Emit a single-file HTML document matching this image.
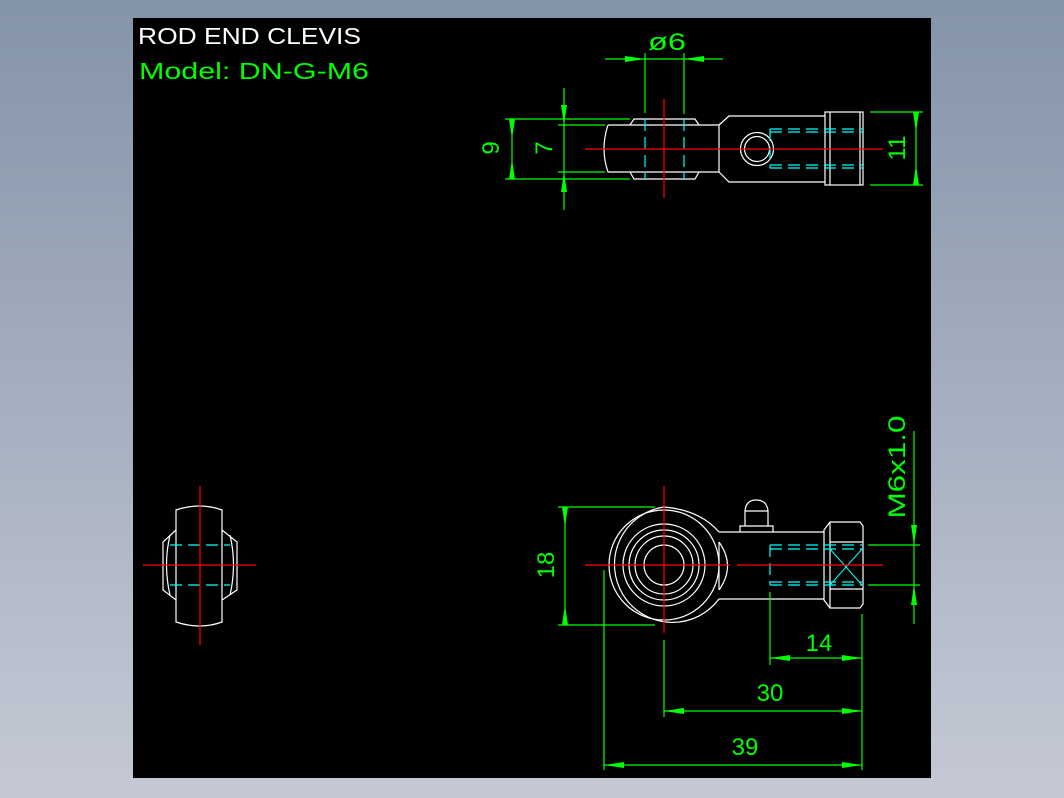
<!DOCTYPE html>
<html><head><meta charset="utf-8"><style>
html,body{margin:0;padding:0;width:1064px;height:798px;overflow:hidden;background:linear-gradient(#8494a9,#c5c9d5);}
svg{position:absolute;left:0;top:0;}
text{font-family:"Liberation Sans",sans-serif;}
</style></head><body>
<svg width="1064" height="798" viewBox="0 0 1064 798">
<rect x="133" y="18" width="798" height="760" fill="#000"/>
<text x="138" y="44" font-size="23" fill="#fff" textLength="223" lengthAdjust="spacingAndGlyphs">ROD END CLEVIS</text>
<text x="139" y="79" font-size="23" fill="#0f0" textLength="230" lengthAdjust="spacingAndGlyphs">Model: DN-G-M6</text>

<g fill="none" stroke="#fff" stroke-width="1.2">
<!-- top view -->
<path d="M608 125 L719 125 L719 172 L608 172 Q600 149 608 125"/>
<path d="M630 125 L634 119 L695 119 L699 125 M630 172 L634 179 L695 179 L699 172"/>
<path d="M719 125 L729 116 L825 116 M719 172 L729 182 L825 182"/>
<circle cx="757" cy="149" r="16.5"/><circle cx="757" cy="149" r="12.5"/>
<rect x="825" y="112" width="38" height="73"/>
<path d="M830 112 V185 M860 112 V185"/>
<!-- front view -->
<path d="M719 532 Q700 510 664 507 A58 58 0 1 0 719 599"/>
<circle cx="664" cy="565" r="55"/><circle cx="664" cy="565" r="41"/><circle cx="664" cy="565" r="35"/><circle cx="664" cy="565" r="29"/><circle cx="664" cy="565" r="20"/>
<path d="M719 532 H824 M719 599 H824 M719 542 V590 M719 542 Q736 566 719 590"/>
<path d="M740 532 V526 H773 V532 M745 526 V511 H768 V526 M745 511 Q746 500 756 500 Q767 500 768 511"/>
<path d="M830 522 L824 530 V600 L830 608 M830 522 H860 L863 526 V604 L860 608 H830 Z M830 542 H863 M830 589 H863"/>
<!-- side view -->
<path d="M176 510 Q200 502 222 510 V622 Q200 630 176 622 Z"/>
<path d="M176 530 L163 542 V590 L176 600 M222 530 L237 542 V590 L222 600 M170 535 Q163 565 170 595 M230 535 Q237 565 230 595"/>
</g>

<g fill="none" stroke="#0ff" stroke-width="1.2" stroke-dasharray="12 6">
<path d="M645 119 V179 M684 119 V179"/>
<path d="M770 129 H863 M770 132 H863 M770 165 H863 M770 168 H863 M770 129 V168"/>
<path d="M770 545 H862 M770 549 H862 M770 582 H862 M770 585 H862 M770 545 V585"/>
<path d="M170 545 H230 M170 585 H230"/>
</g>
<path d="M830 549 L862 585 M862 549 L830 585" stroke="#0ff" stroke-width="1"/>

<g stroke="#f00" stroke-width="1.2" fill="none">
<path d="M585 149 H883 M664 99 V198"/>
<path d="M585 565 H730 M737 565 H883 M664 486 V633"/>
<path d="M143 565 H256 M200 486 V645"/>
</g>

<g stroke="#0f0" stroke-width="1.2" fill="none">
<path d="M605 59 H723 M645 53 V113 M684 53 V114"/>
<path d="M505 119 H630 M505 179 H630 M512 119 V179"/>
<path d="M558 125 H605 M558 172 H605 M564 88 V210"/>
<path d="M870 112 H923 M870 185 H923 M916 112 V185"/>
<path d="M558 507 H655 M558 625 H655 M565 507 V625"/>
<path d="M770 592 V665 M862 614 V770 M770 658 H862"/>
<path d="M664 640 V717 M664 711 H862"/>
<path d="M604 570 V770 M604 765 H862"/>
<path d="M914 431 V624 M868 545 H920 M868 585 H920"/>
</g>
<g fill="#0f0">
<path d="M625 56 L645 59 L625 62Z M704 56 L684 59 L704 62Z"/>
<path d="M509 119 L512 139 L515 119Z M509 179 L512 159 L515 179Z"/>
<path d="M561 105 L564 125 L567 105Z M561 192 L564 172 L567 192Z"/>
<path d="M913 112 L916 132 L919 112Z M913 185 L916 165 L919 185Z"/>
<path d="M562 507 L565 527 L568 507Z M562 625 L565 605 L568 625Z"/>
<path d="M770 658 L790 655 L790 661Z M862 658 L842 655 L842 661Z"/>
<path d="M664 711 L684 708 L684 714Z M862 711 L842 708 L842 714Z"/>
<path d="M604 765 L624 762 L624 768Z M862 765 L842 762 L842 768Z"/>
<path d="M911 525 L914 545 L917 525Z M911 605 L914 585 L917 605Z"/>
</g>
<g fill="#0f0" font-size="24">
<text x="648" y="50" textLength="38" lengthAdjust="spacingAndGlyphs">ø6</text>
<text transform="translate(499,148) rotate(-90)" text-anchor="middle">9</text>
<text transform="translate(552,148) rotate(-90)" text-anchor="middle">7</text>
<text transform="translate(905,148) rotate(-90)" text-anchor="middle">11</text>
<text transform="translate(554,565) rotate(-90)" text-anchor="middle">18</text>
<text transform="translate(905,467) rotate(-90)" text-anchor="middle" textLength="103" lengthAdjust="spacingAndGlyphs">M6x1.0</text>
<text x="819" y="651" text-anchor="middle">14</text>
<text x="770" y="701" text-anchor="middle">30</text>
<text x="745" y="755" text-anchor="middle">39</text>
</g>
</svg>
</body></html>
